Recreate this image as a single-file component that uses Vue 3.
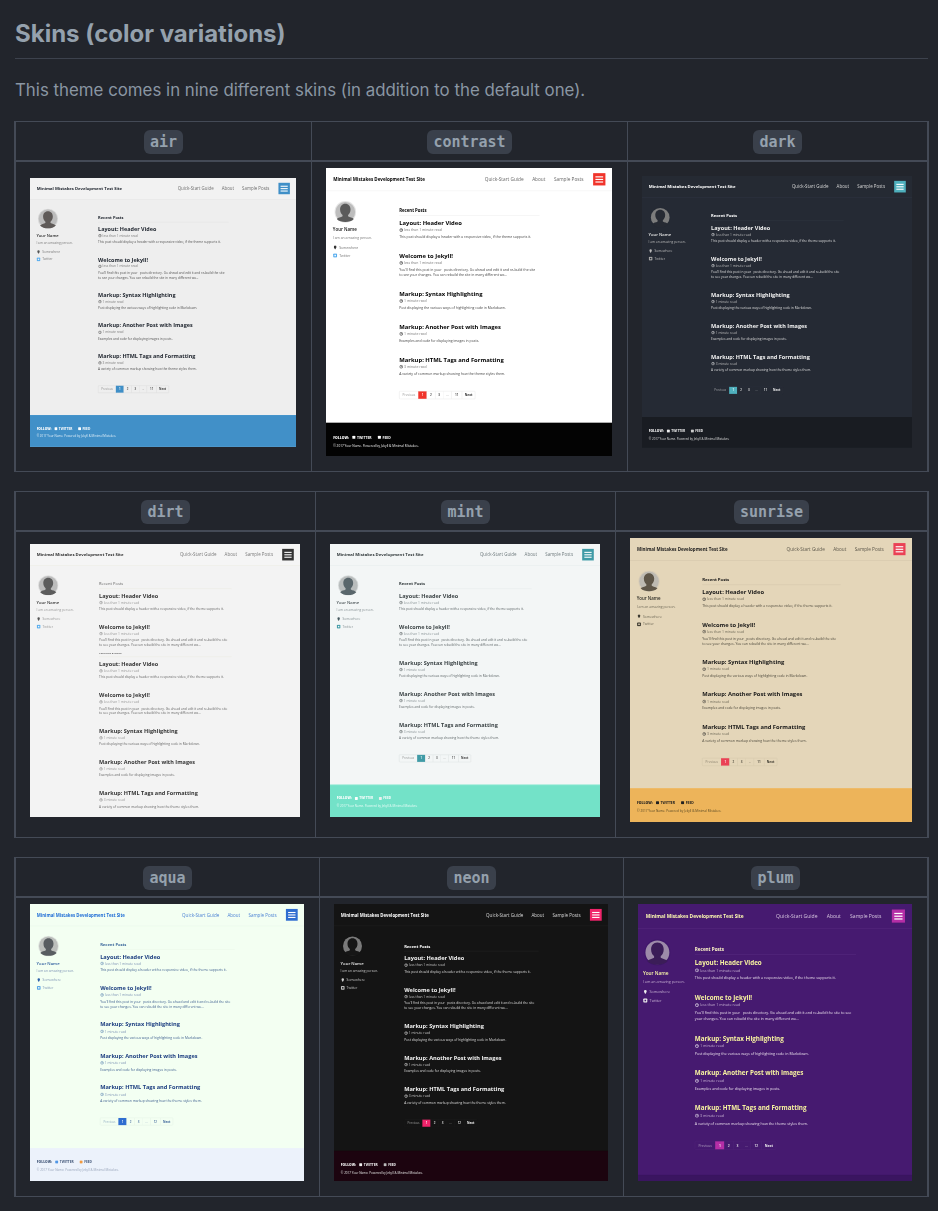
<template>
  <div class="doc">
    <h2 class="title">Skins (color variations)</h2>
    <p class="lead">This theme comes in nine different skins (in addition to the default one).</p>

    <table v-for="(row, r) in rows" :key="r" class="skins">
      <thead>
        <tr>
          <th v-for="s in row" :key="s.name"><code>{{ s.name }}</code></th>
        </tr>
      </thead>
      <tbody>
        <tr>
          <td v-for="s in row" :key="s.name">
            <div class="shot" :class="'skin-' + s.name" :style="{ width: s.w + 'px', height: s.h + 'px' }">
              <div
                class="page"
                :style="{
                  width: (s.design || 1000) + 'px',
                  height: (s.h * (s.design || 1000)) / s.w + 'px',
                  transform: 'scale(' + s.w / (s.design || 1000) + ')'
                }"
              >
                <header class="mast">
                  <span class="site">Minimal Mistakes Development Test Site</span>
                  <nav class="nav">
                    <span>Quick-Start Guide</span>
                    <span>About</span>
                    <span>Sample Posts</span>
                  </nav>
                  <span class="burger"><i></i><i></i><i></i></span>
                </header>

                <div class="body">
                  <aside class="side">
                    <svg class="avatar" viewBox="0 0 80 80">
                      <circle cx="40" cy="40" r="39.500" class="av-ring" />
                      <circle cx="40" cy="40" r="36" class="av-bg" />
                      <path
                        class="av-fg"
                        d="M40 10C28 10 21 19 21 31C21 40 25 47 30 51V56C24 60 14 60 9 66C16 74 28 77 40 77C52 77 64 74 71 66C66 60 56 60 50 56V51C55 47 59 40 59 31C59 19 52 10 40 10Z"
                      />
                    </svg>
                    <div class="name">Your Name</div>
                    <div class="bio">I am an amazing person.</div>
                    <div class="link first">
                      <svg viewBox="0 0 12 12"><path class="ico-pin" d="M6 1a3.4 3.4 0 0 0-3.4 3.4C2.600 6.800 6 11 6 11s3.400-4.200 3.400-6.600A3.400 3.400 0 0 0 6 1z" /></svg>
                      Somewhere
                    </div>
                    <div class="link">
                      <svg viewBox="0 0 12 12"><rect class="ico-tw" x="1" y="1" width="10" height="10" rx="2" /><rect x="4" y="4" width="4" height="4" class="ico-hole" /></svg>
                      Twitter
                    </div>
                  </aside>

                  <main class="main">
                    <h3 class="recent">Recent Posts</h3>
                    <article v-for="(p, i) in s.name === 'dirt' ? posts.slice(0, 2) : posts" :key="i" class="post">
                      <h2>{{ p.title }}</h2>
                      <div class="meta">
                        <svg viewBox="0 0 12 12"><circle cx="6" cy="6" r="4.4" /><path d="M6 3.500V6h2" /></svg>
                        {{ p.read }}
                      </div>
                      <p>{{ p.text }}</p>
                    </article>

                    <template v-if="s.name === 'dirt'">
                      <h3 class="again">Previous &amp; Work</h3>
                      <article v-for="(p, i) in posts" :key="'again' + i" class="post">
                        <h2>{{ p.title }}</h2>
                        <div class="meta">
                          <svg viewBox="0 0 12 12"><circle cx="6" cy="6" r="4.4" /><path d="M6 3.500V6h2" /></svg>
                          {{ p.read }}
                        </div>
                        <p>{{ p.text }}</p>
                      </article>
                    </template>

                    <div v-else class="pager">
                      <span class="dim prev">Previous</span>
                      <span class="on">1</span>
                      <span>2</span>
                      <span>3</span>
                      <span class="dim">...</span>
                      <span class="last">{{ s.last }}</span>
                      <span class="next">Next</span>
                    </div>
                  </main>
                </div>

                <footer v-if="s.name !== 'dirt'" class="foot">
                  <template v-if="s.name !== 'plum'">
                    <div class="follow">
                      <b>FOLLOW:</b>
                      <span><svg viewBox="0 0 12 12"><rect class="ico-ftw" x="1" y="1" width="10" height="10" rx="2" /></svg>TWITTER</span>
                      <span class="feed"><svg viewBox="0 0 12 12"><rect class="ico-feed" x="1" y="1" width="10" height="10" rx="2" /></svg>FEED</span>
                    </div>
                    <div class="copy">© 2017 Your Name. Powered by Jekyll &amp; Minimal Mistakes.</div>
                  </template>
                </footer>
              </div>
            </div>
          </td>
        </tr>
      </tbody>
    </table>
  </div>
</template>

<script setup>
const posts = [
  {
    title: 'Layout: Header Video',
    read: 'less than 1 minute read',
    text: 'This post should display a header with a responsive video, if the theme supports it.'
  },
  {
    title: 'Welcome to Jekyll!',
    read: 'less than 1 minute read',
    text: "You'll find this post in your _posts directory. Go ahead and edit it and re-build the site to see your changes. You can rebuild the site in many different wa..."
  },
  {
    title: 'Markup: Syntax Highlighting',
    read: '1 minute read',
    text: 'Post displaying the various ways of highlighting code in Markdown.'
  },
  {
    title: 'Markup: Another Post with Images',
    read: '1 minute read',
    text: 'Examples and code for displaying images in posts.'
  },
  {
    title: 'Markup: HTML Tags and Formatting',
    read: '3 minute read',
    text: 'A variety of common markup showing how the theme styles them.'
  }
]

// sizes of the pictures as they sit in the table
const rows = [
  [
    { name: 'air', w: 266, h: 269, last: 11 },
    { name: 'contrast', w: 286, h: 288, last: 11 },
    { name: 'dark', w: 270, h: 272, last: 11 }
  ],
  [
    { name: 'dirt', w: 270, h: 273, last: 11 },
    { name: 'mint', w: 270, h: 273, last: 11 },
    { name: 'sunrise', w: 282, h: 284, last: 11 }
  ],
  [
    { name: 'aqua', w: 274, h: 277, last: 12 },
    { name: 'neon', w: 274, h: 277, last: 12 },
    { name: 'plum', w: 274, h: 277, last: 12, design: 897 }
  ]
]
</script>

<style>
body {
  background: #22252c;
}
</style>

<style scoped>
.doc {
  width: 913px;
  padding-left: 15px;
  font-family: Inter, "Liberation Sans", sans-serif;
  color: #8a96a3;
}
.title {
  margin: 0;
  padding: 19px 0 9px;
  font-size: 24px;
  line-height: 30px;
  font-weight: 700;
  color: #95a1ad;
  border-bottom: 1px solid #3d424d;
}
.lead {
  margin: 18px 0 17px;
  font-size: 16.850px;
  line-height: 27px;
}
.skins {
  display: table;
  margin: 0 0 19px -1px;
  border-collapse: collapse;
}
.skins th,
.skins td {
  border: 1px solid #444a56;
}
.skins th {
  height: 36px;
  padding: 2px 0 0;
  border-bottom-width: 2px;
}
.skins td {
  padding: 6px 15px 15px 14px;
  vertical-align: middle;
}
.skins th:first-child,
.skins td:first-child {
  border-left-width: 2px;
}
.skins th:last-child,
.skins td:last-child {
  border-right-width: 2px;
}
code {
  display: inline-block;
  padding: 4px 6px;
  font-family: "DejaVu Sans Mono", monospace;
  font-size: 15px;
  line-height: 16px;
  font-weight: 700;
  color: #95a1ad;
  background: #3a404b;
  border-radius: 6px;
}

/* the pictures: a whole page drawn at design size and shrunk */
.shot {
  overflow: hidden;
  background: var(--bg);
}
.page {
  display: flex;
  flex-direction: column;
  transform-origin: 0 0;
  filter: blur(1.1px);
  font-family: "Open Sans", "Noto Sans", sans-serif;
  color: var(--text);
}
.mast {
  display: flex;
  align-items: center;
  flex: none;
  height: 79px;
  padding: 0 23px 0 25px;
  background: color-mix(in srgb, var(--mast) 99%, transparent);
  border-bottom: 2px solid var(--line);
}
.site {
  font-size: 15.800px;
  font-weight: 700;
  color: var(--site);
}
.nav {
  display: flex;
  gap: 30px;
  margin-left: auto;
  font-size: 16.500px;
  color: var(--nav);
}
.burger {
  display: flex;
  flex-direction: column;
  justify-content: center;
  gap: 5px;
  width: 43px;
  height: 43px;
  margin-left: 34px;
  padding: 0 8px;
  box-sizing: border-box;
  background: var(--accent);
}
.burger i {
  height: 4px;
  background: #fff;
}
.body {
  display: flex;
  flex: 1;
  min-height: 0;
}
.side {
  flex: none;
  box-sizing: border-box;
  width: 256px;
  padding: 34px 0 0 24px;
}
.avatar {
  display: block;
  width: 77px;
  height: 77px;
  margin-left: 5px;
}
.av-ring {
  fill: var(--av-ring);
}
.av-bg {
  fill: var(--av-bg);
}
.av-fg {
  fill: var(--av-fg);
}
.name {
  margin-top: 13px;
  font-size: 15.500px;
  line-height: 20px;
  font-weight: 600;
  color: var(--name);
}
.bio {
  margin-top: 10px;
  font-size: 12px;
  line-height: 16px;
  color: var(--meta);
}
.link {
  display: flex;
  align-items: center;
  gap: 6px;
  margin-top: 8px;
  font-size: 12px;
  line-height: 20px;
  color: var(--meta);
}
.link.first {
  margin-top: 17px;
}
.link svg {
  width: 16px;
  height: 16px;
}
.ico-pin {
  fill: var(--pin);
}
.ico-tw {
  fill: var(--tw);
}
.ico-hole {
  fill: var(--bg);
}
.main {
  flex: none;
  width: 491px;
  padding-top: 56px;
}
.recent {
  margin: 0 0 11px;
  padding-bottom: 8px;
  font-size: 15px;
  line-height: 20px;
  font-weight: var(--recent-weight, 700);
  color: var(--recent);
  border-bottom: 2px solid var(--line);
}
.again {
  margin: -28px 0 12px;
  padding-bottom: 7px;
  font-size: 9px;
  line-height: 12px;
  font-weight: 700;
  text-transform: uppercase;
  color: var(--recent);
  border-bottom: 2px solid var(--line);
}
.post {
  margin-bottom: 43px;
}
.post h2 {
  margin: 0;
  font-size: 20.500px;
  line-height: 26px;
  font-weight: 700;
  color: var(--post);
}
.meta {
  display: flex;
  align-items: center;
  gap: 3px;
  font-size: 12px;
  line-height: 26px;
  color: var(--meta);
}
.meta svg {
  width: 14px;
  height: 14px;
  fill: none;
  stroke: var(--clock);
  stroke-width: 1.500;
}
.post p {
  max-width: 480px;
  margin: 2px 0 0;
  font-size: 12px;
  line-height: 18px;
  color: var(--text);
}
.pager {
  display: inline-flex;
  margin-top: 9px;
  border: 1px solid var(--pg-line);
  border-radius: 3px;
  font-size: 11px;
  line-height: 26px;
  text-align: center;
  font-weight: 600;
  color: var(--pg);
}
.pager span {
  width: 28px;
  border-left: 1px solid var(--pg-line);
}
.pager .prev {
  width: 66px;
  border-left: 0;
}
.pager .last {
  width: 35px;
}
.pager .next {
  width: 45px;
  font-weight: 700;
}
.pager .dim {
  font-weight: 400;
  opacity: 0.55;
}
.pager .on {
  color: #fff;
  background: var(--accent);
  border-left-color: var(--accent);
}
.foot {
  flex: none;
  box-sizing: border-box;
  height: 120px;
  padding: 40px 0 0 25px;
  overflow: hidden;
  background: color-mix(in srgb, var(--foot) 99%, transparent);
  border-top: 2px solid var(--foot-line);
  color: var(--foot-text);
}
.follow {
  display: flex;
  align-items: center;
  gap: 10px;
  font-size: 12px;
  line-height: 18px;
  font-weight: 700;
}
.follow span {
  display: flex;
  align-items: center;
  gap: 5px;
}
.follow .feed {
  margin-left: 10px;
}
.follow svg {
  width: 13px;
  height: 13px;
}
.ico-ftw {
  fill: var(--foot-tw);
}
.ico-feed {
  fill: var(--foot-feed);
}
.copy {
  margin-top: 10px;
  font-size: 11px;
  line-height: 18px;
  color: var(--foot-copy);
}

/* footers and offsets that differ from skin to skin */
.skin-contrast .foot {
  height: 116px;
}
.skin-dark .foot {
  height: 114px;
}
.skin-neon .foot {
  height: 110px;
}
.skin-neon .main {
  padding-top: 62px;
}

/* plum runs larger with a narrower sidebar */
.skin-plum .side {
  width: 186px;
  padding-left: 16px;
}
.skin-plum .avatar {
  width: 87px;
  height: 87px;
  margin-left: 4px;
}
.skin-plum .main {
  width: 528px;
}
.skin-plum .foot {
  height: 20px;
  padding: 0;
}
.skin-plum .post p {
  max-width: none;
  width: 535px;
  line-height: 20px;
}
.skin-plum .post {
  margin-bottom: 40px;
}
.skin-plum .pager {
  margin-top: 8px;
}

.skin-air {
  --bg: #eeeeee; --mast: #f2f2f2; --line: #e4e4e4; --site: #222831; --nav: #6e6e6e;
  --accent: #3f8fc7; --name: #2b2b2b; --meta: #7d7d7d; --pin: #555; --tw: #55acee;
  --recent: #222831; --post: #222831; --text: #555; --clock: #444;
  --av-ring: #d6d6d6; --av-bg: #bcbcbc; --av-fg: #5f5a58;
  --pg: #444; --pg-line: #cfcfcf;
  --foot: #3f8fc7; --foot-line: #4a98cf; --foot-text: #fff; --foot-copy: #dcecf6;
  --foot-tw: #fff; --foot-feed: #fff;
}
.skin-contrast {
  --bg: #ffffff; --mast: #ffffff; --line: #f0f0f0; --site: #000; --nav: #666;
  --accent: #f0342b; --name: #111; --meta: #777; --pin: #333; --tw: #55acee;
  --recent: #000; --post: #000; --text: #444; --clock: #111;
  --av-ring: #e6e6e6; --av-bg: #bdbdbd; --av-fg: #5a5a5a;
  --pg: #333; --pg-line: #d8d8d8;
  --foot: #000000; --foot-line: #000; --foot-text: #fff; --foot-copy: #eee;
  --foot-tw: #fff; --foot-feed: #fff;
}
.skin-dark {
  --bg: #252a34; --mast: #252a34; --line: #2f3541; --site: #fff; --nav: #d5d5d5;
  --accent: #4fb0bd; --name: #e6e6e6; --meta: #bbb; --pin: #bbb; --tw: #aaa;
  --recent: #fff; --post: #f2f2f2; --text: #ddd; --clock: #fff;
  --av-ring: #252a34; --av-bg: #7c7c7c; --av-fg: #262a33;
  --pg: #eee; --pg-line: #30353f;
  --foot: #191c22; --foot-line: #191c22; --foot-text: #eee; --foot-copy: #ddd;
  --foot-tw: #eee; --foot-feed: #ccc;
}
.skin-dirt {
  --bg: #f3f3f3; --mast: #f5f5f5; --line: #ebebe2; --site: #343434; --nav: #7a7a7a;
  --accent: #343434; --name: #343434; --meta: #999; --pin: #555; --tw: #55acee;
  --recent: #666; --post: #343434; --text: #666; --clock: #777;
  --recent-weight: 400;
  --av-ring: #e0e0e0; --av-bg: #bcbcbc; --av-fg: #5c5c5c;
  --pg: #444; --pg-line: #ccc;
  --foot: #f3f3f3; --foot-line: #f3f3f3; --foot-text: #333; --foot-copy: #666;
  --foot-tw: #333; --foot-feed: #333;
}
.skin-mint {
  --bg: #f3f6f6; --mast: #f3f6f6; --line: #e6ecec; --site: #333b3d; --nav: #6f7b7e;
  --accent: #409ba6; --name: #4c5558; --meta: #8a9497; --pin: #47595f; --tw: #3f9aa6;
  --recent: #333b3d; --post: #3c4446; --text: #5f6769; --clock: #3c4446;
  --av-ring: #d8dcdc; --av-bg: #b9bdbd; --av-fg: #59666b;
  --pg: #444; --pg-line: #ccd2d2;
  --foot: #71e2c7; --foot-line: #b5f0e2; --foot-text: #fff; --foot-copy: #e8fbf6;
  --foot-tw: #fff; --foot-feed: #eee;
}
.skin-sunrise {
  --bg: #e4d6b9; --mast: #e4d6b9; --line: #d5c8ad; --site: #1c1c1c; --nav: #5b5648;
  --accent: #ea4155; --name: #2b2a24; --meta: #6f6a58; --pin: #3d3a30; --tw: #3d3a30;
  --recent: #151515; --post: #171717; --text: #4c483c; --clock: #222;
  --av-ring: #d8cdb7; --av-bg: #bdbab2; --av-fg: #5e5648;
  --pg: #3c392f; --pg-line: #c9bda3;
  --foot: #edb359; --foot-line: #f0bc6b; --foot-text: #1c1c1c; --foot-copy: #5a4a25;
  --foot-tw: #222; --foot-feed: #222;
}
.skin-aqua {
  --bg: #f3fff2; --mast: #f3fff2; --line: #ebf7ea; --site: #1f6dd6; --nav: #4c82d4;
  --accent: #2f6dd0; --name: #2c5c9e; --meta: #7f95b5; --pin: #2b5ea8; --tw: #5aa5e6;
  --recent: #3e6a9d; --post: #1c3e80; --text: #3e5f8f; --clock: #4c79a9;
  --av-ring: #e2e8e2; --av-bg: #bcbfbc; --av-fg: #585d61;
  --pg: #436a9e; --pg-line: #dbe7dc;
  --foot: #ecf2fb; --foot-line: #ecf2fb; --foot-text: #44597a; --foot-copy: #9aa6bb;
  --foot-tw: #4f96e6; --foot-feed: #f29a3f;
}
.skin-neon {
  --bg: #141414; --mast: #141414; --line: #242424; --site: #fff; --nav: #d8d8d8;
  --accent: #f0246b; --name: #e8e8e8; --meta: #c5c5c5; --pin: #ccc; --tw: #bbb;
  --recent: #fff; --post: #f2f2f2; --text: #dcdcdc; --clock: #fff;
  --av-ring: #141414; --av-bg: #7a7a7a; --av-fg: #161616;
  --pg: #eee; --pg-line: #202020;
  --foot: #1c040f; --foot-line: #1c040f; --foot-text: #f2f2f2; --foot-copy: #e2e2e2;
  --foot-tw: #eee; --foot-feed: #bbb;
}
.skin-plum {
  --bg: #461a70; --mast: #461a70; --line: #54287e; --site: #fdf9b0; --nav: #d9c8e0;
  --accent: #b52ea6; --name: #f7f3a8; --meta: #c4aed0; --pin: #eee; --tw: #eee;
  --recent: #fff8c8; --post: #f7f3a0; --text: #e8ddea; --clock: #fff;
  --av-ring: #3f176a; --av-bg: #9d8ba9; --av-fg: #3b1d58;
  --pg: #eee; --pg-line: #55297f;
  --foot: #3a1560; --foot-line: #3a1560; --foot-text: #eee; --foot-copy: #ddd;
  --foot-tw: #eee; --foot-feed: #eee;
}
</style>
